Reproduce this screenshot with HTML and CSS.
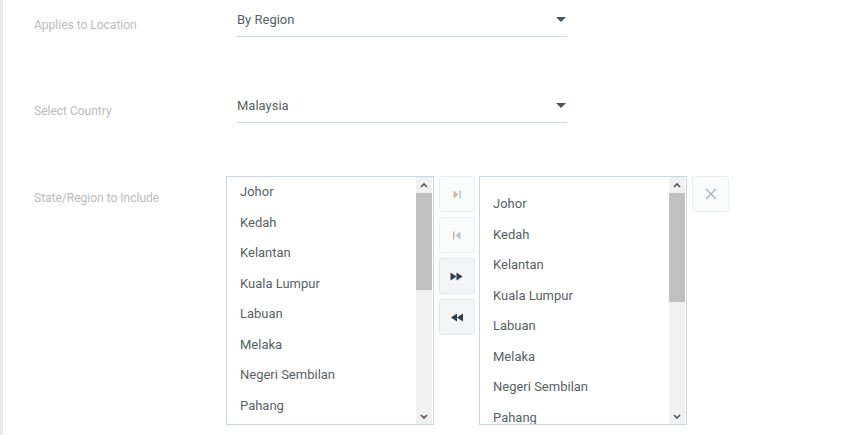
FILE: index.html
```html
<!DOCTYPE html>
<html>
<head>
<meta charset="utf-8">
<link rel="stylesheet" href="styles.css">
</head>
<body>
<div class="page">
  <div class="row row-select">
    <div class="label">Applies to Location</div>
    <div class="field">
      <div class="select"><span class="value">By Region</span><span class="caret"></span></div>
    </div>
  </div>
  <div class="row row-select row-country">
    <div class="label">Select Country</div>
    <div class="field">
      <div class="select"><span class="value">Malaysia</span><span class="caret"></span></div>
    </div>
  </div>
  <div class="row row-dual">
    <div class="label label-dual">State/Region to Include</div>
    <div class="dual">
      <div class="listbox">
        <ul class="items">
          <li>Johor</li><li>Kedah</li><li>Kelantan</li><li>Kuala Lumpur</li><li>Labuan</li><li>Melaka</li><li>Negeri Sembilan</li><li>Pahang</li>
        </ul>
        <div class="scrollbar">
          <div class="sb-btn"><svg width="8" height="5" viewBox="0 0 8 5"><polyline points="1,4 4,1 7,4" fill="none" stroke="#505050" stroke-width="1.6"/></svg></div>
          <div class="track"><div class="thumb" style="height:97px"></div></div>
          <div class="sb-btn"><svg width="8" height="5" viewBox="0 0 8 5"><polyline points="1,1 4,4 7,1" fill="none" stroke="#505050" stroke-width="1.6"/></svg></div>
        </div>
      </div>
      <div class="btns">
        <button class="mv mv-disabled"><svg width="10" height="9" viewBox="0 0 10 9"><polygon points="1.5,0.5 6.5,4.5 1.5,8.5" fill="#c9b7b0"/><rect x="7.5" y="0.5" width="1.5" height="8" fill="#b9c2ca"/></svg></button>
        <button class="mv mv-disabled"><svg width="10" height="9" viewBox="0 0 10 9"><rect x="1" y="0.5" width="1.5" height="8" fill="#c9b7b0"/><polygon points="8.5,0.5 3.5,4.5 8.5,8.5" fill="#b9c2ca"/></svg></button>
        <button class="mv"><svg width="14" height="9" viewBox="0 0 14 9"><polygon points="0.5,0.5 6.5,4.5 0.5,8.5" fill="#2e3d4b"/><polygon points="6.5,0.5 12.5,4.5 6.5,8.5" fill="#2e3d4b"/></svg></button>
        <button class="mv"><svg width="14" height="9" viewBox="0 0 14 9"><polygon points="7,0.5 1,4.5 7,8.5" fill="#2e3d4b"/><polygon points="13,0.5 7,4.5 13,8.5" fill="#2e3d4b"/></svg></button>
      </div>
      <div class="listbox listbox-right">
        <ul class="items items-right">
          <li>Johor</li><li>Kedah</li><li>Kelantan</li><li>Kuala Lumpur</li><li>Labuan</li><li>Melaka</li><li>Negeri Sembilan</li><li>Pahang</li>
        </ul>
        <div class="scrollbar">
          <div class="sb-btn"><svg width="8" height="5" viewBox="0 0 8 5"><polyline points="1,4 4,1 7,4" fill="none" stroke="#505050" stroke-width="1.6"/></svg></div>
          <div class="track"><div class="thumb" style="height:109px"></div></div>
          <div class="sb-btn"><svg width="8" height="5" viewBox="0 0 8 5"><polyline points="1,1 4,4 7,1" fill="none" stroke="#505050" stroke-width="1.6"/></svg></div>
        </div>
      </div>
      <button class="clear"><svg width="12" height="12" viewBox="0 0 12 12"><path d="M1 1 L11 11 M11 1 L1 11" stroke="#a9b1b9" stroke-width="1.3" fill="none"/></svg></button>
    </div>
  </div>
</div>
</body>
</html>
```

FILE: styles.css
```css
* { box-sizing: border-box; }
html, body { margin: 0; padding: 0; background: #fff; }
body {
  width: 853px;
  height: 435px;
  overflow: hidden;
  font-family: Roboto, "Liberation Sans", Arial, sans-serif;
}
.page {
  height: 435px;
  border-left: 3px solid #e9e9e9;
  padding-left: 31px;
}
.row {
  display: flex;
  align-items: flex-start;
}
.row-country { margin-top: 49px; }
.row-dual { margin-top: 53px; }
.label {
  width: 192px;
  flex: none;
  font-size: 12px;
  line-height: 18px;
  padding-top: 16px;
  color: #bcbcbc;
}
.label-dual { padding-top: 13px; }
.field { flex: none; }
.select {
  margin-left: 11px;
  width: 330px;
  height: 37px;
  border-bottom: 1px solid #d3dbe1;
  padding-top: 11px;
  padding-right: 1px;
  display: flex;
  align-items: flex-start;
  justify-content: space-between;
}
.value {
  font-size: 13px;
  line-height: 18px;
  color: #5a5f64;
}
.caret {
  margin-top: 6px;
  width: 0;
  height: 0;
  border-left: 5px solid transparent;
  border-right: 5px solid transparent;
  border-top: 5px solid #4a545e;
}
.dual {
  display: flex;
  align-items: flex-start;
}
.listbox {
  width: 208px;
  height: 249px;
  border: 1px solid #cfd6dc;
  display: flex;
  background: #fff;
}
.items {
  list-style: none;
  margin: 0;
  padding: 0;
  flex: 1;
  overflow: hidden;
}
.items li {
  height: 30.57px;
  line-height: 30.57px;
  padding-left: 13px;
  font-size: 13px;
  color: #5a5f64;
  white-space: nowrap;
}
.items-right { padding-top: 12px; }
.scrollbar {
  width: 16px;
  flex: none;
  margin-right: 1px;
  display: flex;
  flex-direction: column;
  background: #f1f1f1;
}
.sb-btn {
  height: 16px;
  flex: none;
  display: flex;
  align-items: center;
  justify-content: center;
}
.track { flex: 1; }
.thumb {
  background: #c1c1c1;
  width: 100%;
}
.btns {
  margin-left: 5px;
  margin-right: 4px;
  display: flex;
  flex-direction: column;
  gap: 5px;
}
.mv, .clear {
  width: 36px;
  height: 36px;
  padding: 0;
  border: 1px solid #e3e7ea;
  border-radius: 3px;
  background: #f3f5f7;
  display: flex;
  align-items: center;
  justify-content: center;
}
.mv-disabled { background: #fafbfb; border-color: #eceef0; }
.clear {
  margin-left: 5px;
  background: #fafbfb;
  border-color: #eceef0;
  width: 37px;
}
```
